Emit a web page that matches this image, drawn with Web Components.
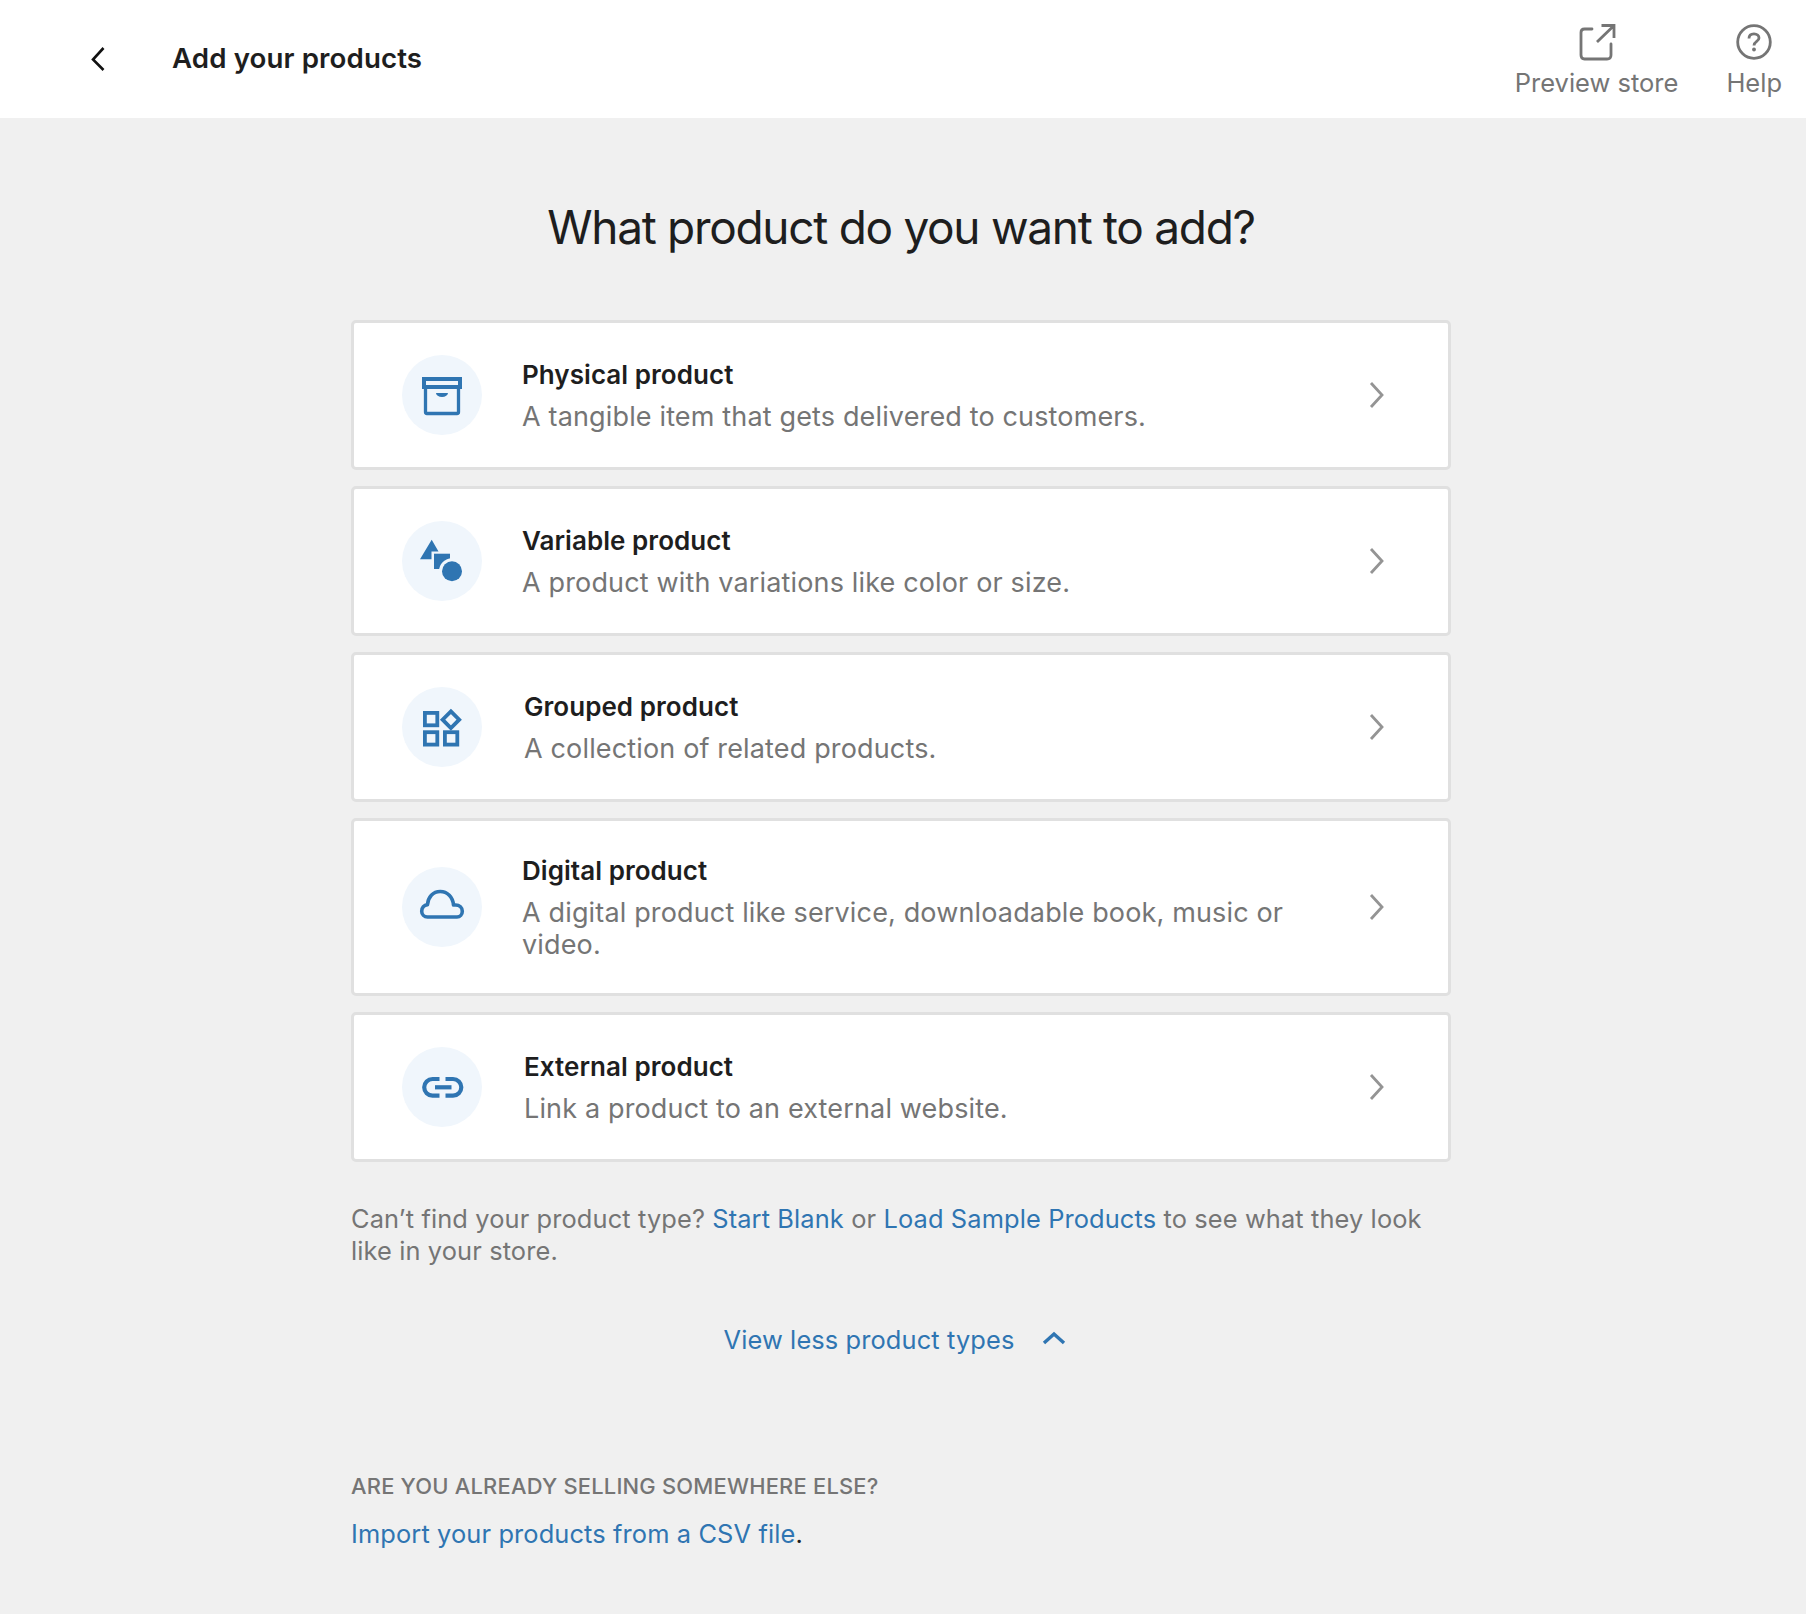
<!doctype html>
<html lang="en"><head><meta charset="utf-8"><title>Add your products</title>
<style>html,body{margin:0;background:#f0f0f0}body{font-family:Inter,"Liberation Sans",sans-serif;color:#1e1e1e}</style>
</head><body>
<wc-topbar heading="Add your products"></wc-topbar>
<wc-page>
<wc-product-card heading="Physical product" desc="A tangible item that gets delivered to customers."><svg slot="icon" viewBox="0 0 80 80" width="80" height="80" fill="none" stroke="#2f75b2"><rect x="22" y="24" width="36" height="8" stroke-width="4"/><path d="M23.500 34v23a1.500 1.500 0 0 0 1.500 1.500h30a1.500 1.500 0 0 0 1.500-1.500V34" stroke-width="3.300"/><path d="M34 38h12a6 4 0 0 1-12 0z" fill="#2f75b2" stroke="none"/></svg></wc-product-card>
<wc-product-card heading="Variable product" desc="A product with variations like color or size."><svg slot="icon" viewBox="0 0 80 80" width="80" height="80" fill="#2f75b2"><path d="M29.700 18.700 18 38.300h11.500v-7.800h7z"/><path d="M32 32.700h16V48H32z"/><circle cx="50" cy="50.300" r="13" fill="#f0f6fc"/><circle cx="50" cy="50.300" r="10"/></svg></wc-product-card>
<wc-product-card indent heading="Grouped product" desc="A collection of related products."><svg slot="icon" viewBox="0 0 80 80" width="80" height="80" fill="none" stroke="#2f75b2" stroke-width="3.800"><rect x="22.900" y="25.900" width="12.400" height="12.400"/><rect x="22.900" y="45.200" width="12.400" height="12.400"/><rect x="42.900" y="45.200" width="12.400" height="12.400"/><path d="M48.900 24.400 57.200 32.700 48.900 41 40.600 32.700z"/></svg></wc-product-card>
<wc-product-card heading="Digital product" desc="A digital product like service, downloadable book, music or video."><svg slot="icon" viewBox="0 0 80 80" width="80" height="80" fill="none" stroke="#2f75b2" stroke-width="3.600" stroke-linejoin="round"><path d="M25.500 50H55C58 50 60.300 47.400 60.300 44.300 60.300 40.800 57.500 38 53.600 38H51.500C50.800 30 45.400 24.500 38.200 24.500 31 24.500 26 30 25.500 37.600 22 38 19.700 40.800 19.700 44.200 19.700 47.500 22.200 50 25.500 50Z"/></svg></wc-product-card>
<wc-product-card indent heading="External product" desc="Link a product to an external website."><svg slot="icon" viewBox="0 0 80 80" width="80" height="80" fill="none" stroke="#2f75b2" stroke-width="4.200"><path d="M37.500 32H30.500a8.300 8.300 0 0 0 0 16.600H37.500"/><path d="M43.500 32H51a8.300 8.300 0 0 1 0 16.600H43.500"/><path d="M33 40.300H49.500"/></svg></wc-product-card>
<wc-footer-note></wc-footer-note>
</wc-page>
<script>
const def=(name,html,extra)=>{customElements.define(name,class extends HTMLElement{constructor(){super();this.attachShadow({mode:'open'}).innerHTML=html;}connectedCallback(){extra&&extra(this)}})};
def('wc-topbar',`<style>
:host{display:flex;align-items:center;height:118px;background:#fff;padding:0 24px 0 88px;box-sizing:border-box}
.back{width:24px;height:24px;display:block;margin-right:60px}
h1{flex:1;margin:0;font-size:27.700px;font-weight:600;letter-spacing:.1px;line-height:1}
.act{display:flex;flex-direction:column;align-items:center;color:#757575;font-size:25.500px;gap:5px;margin-left:48px;line-height:32px;padding-top:3px}
svg{display:block}
</style>
<svg class="back" viewBox="0 0 24 24" fill="none" stroke="#111" stroke-width="2.600"><path d="M15.500 1 5 12.500 15.500 23"/></svg>
<h1 id="t"></h1>
<div class="act"><svg width="40" height="40" viewBox="0 0 40 40" fill="none" stroke="#757575" stroke-width="2.800" stroke-linecap="round"><path d="M15 7H7.500Q4 7 4 10.500V33Q4 37 7.500 37H30Q34 37 34 33V22"/><path d="M20 20 36 4.500M24.500 3.500H37V16" stroke-linecap="butt"/></svg><span>Preview store</span></div>
<div class="act"><svg width="40" height="40" viewBox="0 0 40 40" fill="none" stroke="#757575" stroke-width="2.800"><circle cx="20" cy="20" r="16.300"/><path d="M15 16.500C15 13.500 17 11.800 20 11.800 23 11.800 25 13.600 25 16 25 19.500 20 19.300 20 23.500" /><circle cx="20" cy="27.500" r="1.900" fill="#757575" stroke="none"/></svg><span>Help</span></div>`,
h=>h.shadowRoot.getElementById('t').textContent=h.getAttribute('heading'));
def('wc-page',`<style>
:host{display:block;width:1100px;margin-left:351px;padding-top:80px;box-sizing:content-box}
h2{margin:0 0 64px;text-align:center;font-size:46px;line-height:58px;font-weight:400;letter-spacing:-1.300px}
.list{display:flex;flex-direction:column;gap:16px}
</style><h2>What product do you want to add?</h2><div class="list"><slot></slot></div>`);
def('wc-product-card',`<style>
:host{display:flex;align-items:center;background:#fff;border:3px solid #e0e0e0;border-radius:5px;box-sizing:border-box;min-height:150px;padding:32px 62px 32px 48px}
.c{width:80px;height:80px;border-radius:50%;background:#f0f6fc;flex:none;margin:-1px 40px -1px 0}
:host([indent]) .c{margin-right:42px}
.b{flex:1;min-width:0;padding:2px 58px 0 0}
.h{font-size:26px;line-height:32px;font-weight:600;letter-spacing:.05px;margin-bottom:10px}
.d{font-size:27px;line-height:32px;color:#757575;letter-spacing:.15px}
svg{display:block;flex:none}
</style><div class="c"><slot name="icon"></slot></div><div class="b"><div class="h" id="h"></div><div class="d" id="d"></div></div>
<svg width="18" height="28" viewBox="0 0 18 28" fill="none" stroke="#949494" stroke-width="2.800"><path d="M3 2 14 14 3 26"/></svg>`,
h=>{h.shadowRoot.getElementById('h').textContent=h.getAttribute('heading');h.shadowRoot.getElementById('d').textContent=h.getAttribute('desc')});
def('wc-footer-note',`<style>
:host{display:block;padding-top:25px;color:#757575;font-size:25.400px;line-height:32px;letter-spacing:.12px}
a{color:#2f75b2;text-decoration:none}
p{margin:0}
.more{display:flex;justify-content:center;align-items:center;margin-top:57px;padding-right:12px;color:#2f75b2;gap:28px}
.more svg{margin-top:-4px}
.k{margin-top:114px;font-size:21.900px;line-height:32px;letter-spacing:.22px;text-transform:uppercase;font-weight:500}
.i{margin-top:16px;color:#1e1e1e}
svg{display:block}
</style>
<p>Can’t find your product type? <a>Start Blank</a> or <a>Load Sample Products</a> to see what they look<br>like in your store.</p>
<div class="more"><span>View less product types</span><svg width="24" height="14" viewBox="0 0 24 14" fill="none" stroke="#2f75b2" stroke-width="3.400"><path d="M2 12 12 3 22 12"/></svg></div>
<div class="k">Are you already selling somewhere else?</div>
<p class="i"><a>Import your products from a CSV file</a>.</p>`);
</script>
</body></html>
